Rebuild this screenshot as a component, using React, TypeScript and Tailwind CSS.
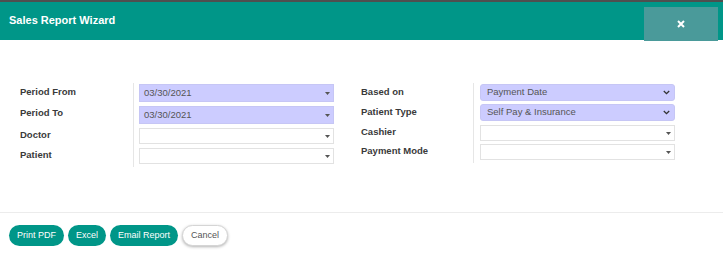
import type { ReactNode } from 'react';

const Caret = () => (
  <svg width="5" height="3" viewBox="0 0 5 3" className="shrink-0">
    <polygon points="0,0 5,0 2.5,3" fill="#555" />
  </svg>
);

const Chevron = () => (
  <svg width="7" height="5" viewBox="0 0 7 5" className="shrink-0">
    <polyline points="0.8,1 3.5,3.7 6.2,1" fill="none" stroke="#333" strokeWidth="1.3" />
  </svg>
);

interface FieldProps {
  value?: string;
  filled?: boolean;
  rounded?: boolean;
  className: string;
  icon: ReactNode;
}

const Field = ({ value, filled, rounded, className, icon }: FieldProps) => (
  <div
    className={[
      'flex items-center justify-between pl-[4px] pr-[3px] border text-[9.5px] text-[#555]',
      filled ? 'bg-[#ccccff] border-[#c6c6f5]' : 'bg-white border-[#e2e2e2]',
      rounded ? 'rounded-[3px] pl-[6px] pr-[4px]' : '',
      className,
    ].join(' ')}
  >
    <span>{value}</span>
    {icon}
  </div>
);

const Label = ({ children, className }: { children: ReactNode; className: string }) => (
  <div className={`text-[9.5px] font-bold leading-[12px] text-[#3a3a3a] ${className}`}>{children}</div>
);

const btn = 'h-[21px] rounded-full text-[9px] px-[8px] leading-none';

export default function App() {
  return (
    <div className="w-[723px] h-[256px] bg-white overflow-hidden font-['Liberation_Sans',Arial,sans-serif]">
      <div className="h-[2px] bg-[#4f4f4f]" />
      <div className="h-[38px] bg-[#009688] flex items-start justify-between">
        <h1 className="pl-[9px] pt-[11px] text-[11px] leading-[14px] font-bold text-white">Sales Report Wizard</h1>
        <button className="mt-[5px] mr-[5px] w-[74px] h-[34px] bg-[#4a9a9a] flex items-center justify-center">
          <svg width="8" height="8" viewBox="0 0 8 8">
            <path d="M1 1 L7 7 M7 1 L1 7" stroke="#fff" strokeWidth="2" />
          </svg>
        </button>
      </div>

      <div className="h-[172px] flex pt-[43px] items-start">
        {/* left group */}
        <div className="flex">
          <div className="w-[133px] pl-[20px] pt-[3px] flex flex-col">
            <Label className="">Period From</Label>
            <Label className="mt-[9px]">Period To</Label>
            <Label className="mt-[10px]">Doctor</Label>
            <Label className="mt-[8px]">Patient</Label>
          </div>
          <div className="w-px bg-[#e6e6e6]" />
          <div className="w-[195px] ml-[5px] pt-[1px] pb-[3px] flex flex-col gap-[4px]">
            <Field value="03/30/2021" filled className="h-[18px]" icon={<Caret />} />
            <Field value="03/30/2021" filled className="h-[18px]" icon={<Caret />} />
            <Field className="h-[16px]" icon={<Caret />} />
            <Field className="h-[16px]" icon={<Caret />} />
          </div>
        </div>

        {/* right group */}
        <div className="flex ml-[27px]">
          <div className="w-[112px] pt-[3px] flex flex-col">
            <Label className="">Based on</Label>
            <Label className="mt-[8px]">Patient Type</Label>
            <Label className="mt-[8px]">Cashier</Label>
            <Label className="mt-[7px]">Payment Mode</Label>
          </div>
          <div className="w-px bg-[#e6e6e6]" />
          <div className="w-[195px] ml-[6px] pt-[1px] pb-[3px] flex flex-col">
            <Field value="Payment Date" filled rounded className="h-[17px]" icon={<Chevron />} />
            <Field value="Self Pay & Insurance" filled rounded className="h-[17px] mt-[3px]" icon={<Chevron />} />
            <Field className="h-[16px] mt-[4px]" icon={<Caret />} />
            <Field className="h-[16px] mt-[3px]" icon={<Caret />} />
          </div>
        </div>
      </div>

      <div className="border-t border-[#ececec] pt-[12px] pl-[9px] flex gap-[4px]">
        <button className={`${btn} bg-[#009688] text-white`}>Print PDF</button>
        <button className={`${btn} bg-[#009688] text-white`}>Excel</button>
        <button className={`${btn} bg-[#009688] text-white`}>Email Report</button>
        <button className={`${btn} px-[7px] bg-white text-[#555] border border-[#d5d5d5] shadow-[0_1px_3px_rgba(0,0,0,0.3)]`}>Cancel</button>
      </div>
    </div>
  );
}
